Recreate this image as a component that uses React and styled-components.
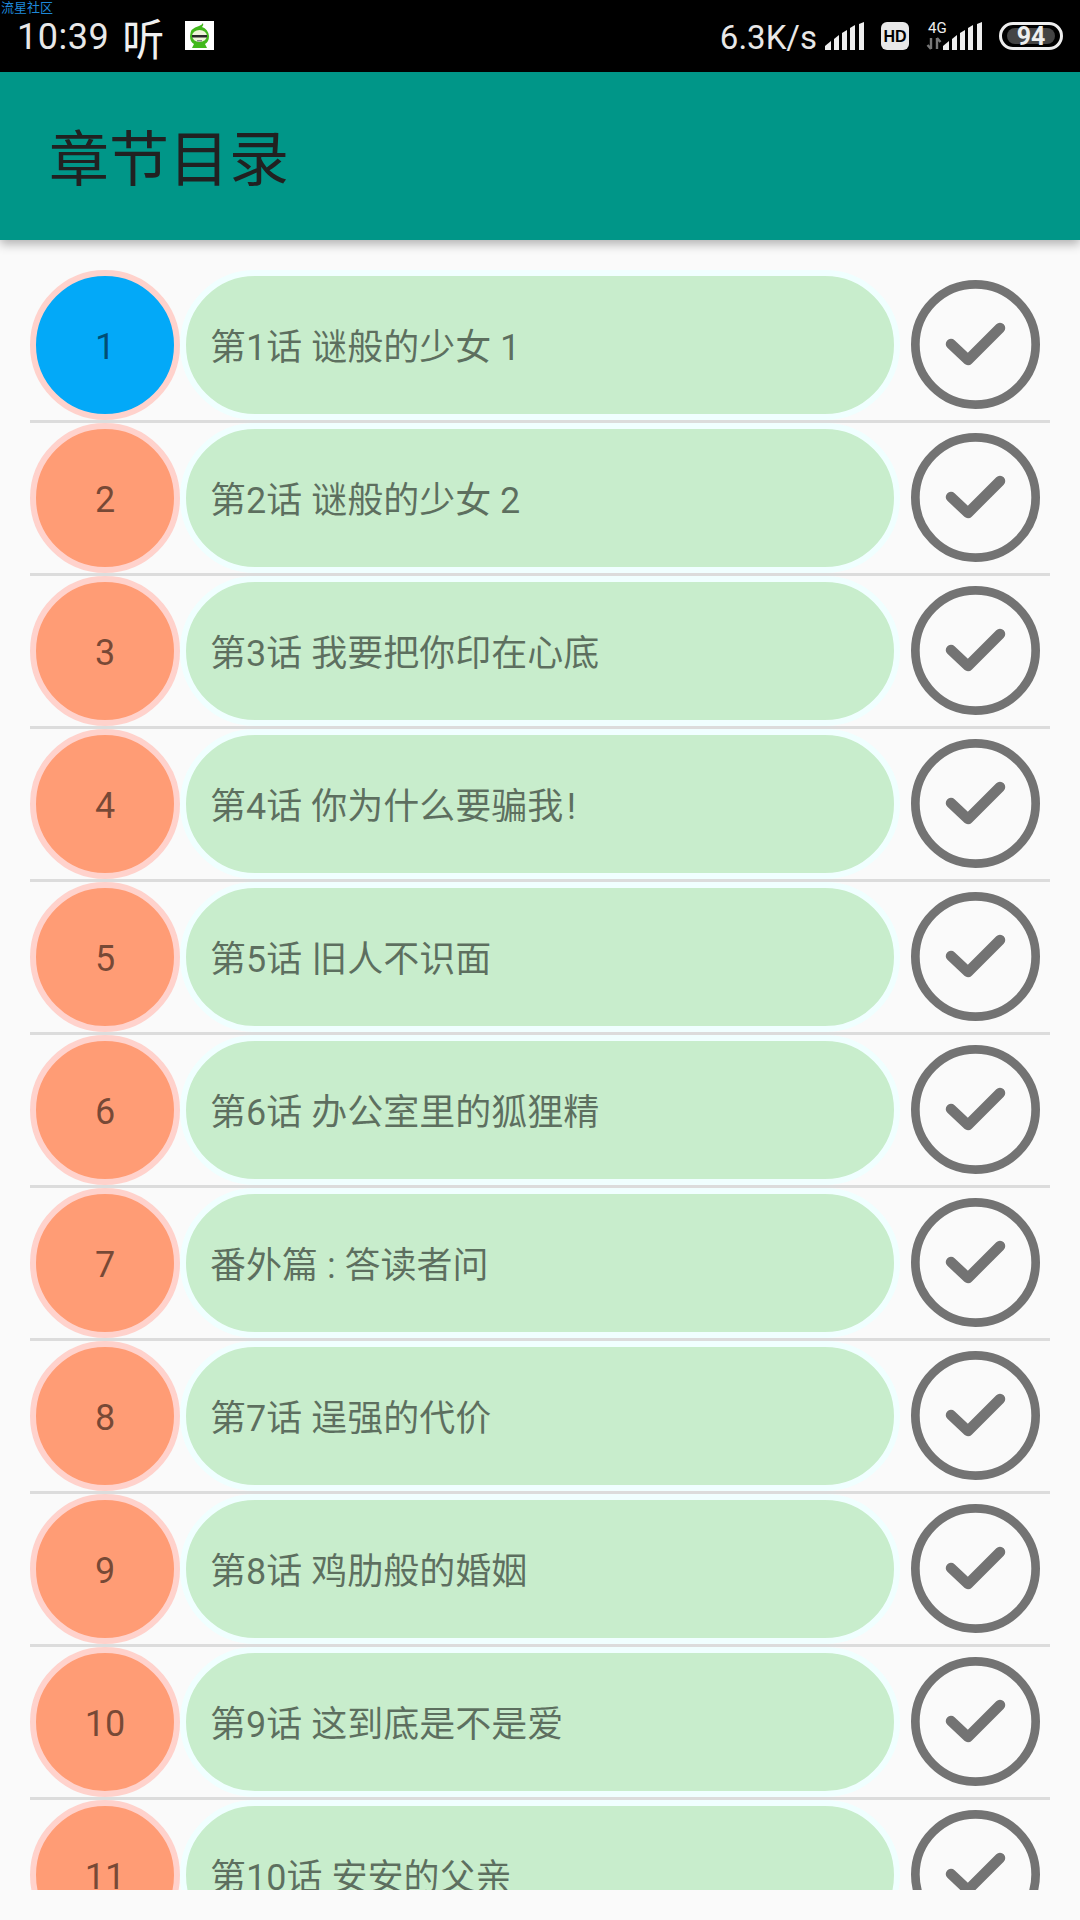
import React from 'react';
import styled, { createGlobalStyle } from 'styled-components';

const Global = createGlobalStyle`
  html, body { margin: 0; padding: 0; background: #fafafa; }
  body { font-family: "Roboto", "Noto Sans CJK SC", sans-serif; }
`;
const Page = styled.div`
  width: 1080px; height: 1920px; display: flex; flex-direction: column; overflow: hidden; background: #fafafa;
`;
const StatusBar = styled.div`
  height: 72px; flex: none; background: #000; color: #e8e8e8; position: relative;
  display: flex; align-items: center; padding: 2px 0 0 17px; box-sizing: border-box;
`;
const Watermark = styled.span`
  position: absolute; left: 1px; top: 0; font-size: 13px; line-height: 14px; color: #1e88d8;
  font-family: "Noto Sans CJK SC", sans-serif;
`;
const Clock = styled.span` font-size: 36px; letter-spacing: .5px; `;
const Listen = styled.span`
  font-family: "Noto Sans CJK SC", sans-serif; font-weight: 400; font-size: 42px; line-height: 44px; color: #f0f0f0;
  margin-left: 13px; width: 42px; display: block; transform: scaleY(1.05);
`;
const Mascot = styled.svg` margin-left: 21px; flex: none; margin-bottom: 3px; `;
const StatusRight = styled.div`
  margin-left: auto; display: flex; align-items: center; padding-right: 17px;
`;
const Speed = styled.span` font-size: 33px; margin-right: 8px; `;
const Icon = styled.svg` flex: none; display: block; margin-left: ${p => p.$gap || 0}px; margin-bottom: 3px; `;
const AppBar = styled.header`
  height: 168px; flex: none; background: #009688; display: flex; align-items: center; padding-left: 49px;
  box-shadow: 0 4px 10px rgba(0,0,0,.3); position: relative; z-index: 1;
`;
const Title = styled.h1`
  margin: -4px 0 0; font-weight: 400; font-size: 60px; color: #212121; font-family: "Noto Sans CJK SC", sans-serif;
`;
const List = styled.div`
  height: 1620px; margin-top: 30px; flex: none; padding: 0 30px; overflow: hidden; box-sizing: border-box;
`;
const Row = styled.div`
  display: flex; align-items: center; height: 153px; box-sizing: border-box; border-bottom: 3px solid #dcdcdc;
`;
const Badge = styled.div`
  width: 150px; height: 150px; flex: none; box-sizing: border-box; border-radius: 50%;
  border: 6px solid #ffd2cc; background: ${p => p.$active ? '#03a9f8' : '#ff9c75'};
  color: rgba(0,0,0,.54); display: flex; align-items: center; justify-content: center; font-size: 36px; padding-top: 4px;
`;
const Pill = styled.div`
  width: 720px; height: 150px; flex: none; box-sizing: border-box; border-radius: 75px;
  border: 6px solid #f0ffff; background: #c8edcc; color: rgba(0,0,0,.54);
  display: flex; align-items: center; padding: 0 0 2px 24px; font-size: 36px; white-space: pre;
  font-family: "Roboto", "Noto Sans CJK SC", sans-serif;
`;
const CheckWrap = styled.div` margin: 0 0 0 11px; flex: none; display: flex; align-self: flex-start; padding-top: 10px; `;

const items = ['第1话 谜般的少女 1','第2话 谜般的少女 2','第3话 我要把你印在心底','第4话 你为什么要骗我\u200a!','第5话 旧人不识面','第6话 办公室里的狐狸精','番外篇 : 答读者问','第7话 逞强的代价','第8话 鸡肋般的婚姻','第9话 这到底是不是爱','第10话 安安的父亲'];

const Bars = ({ gap = 0 }) => (
  <Icon $gap={gap} width="40" height="28" viewBox="0 0 40 28" fill="#eee">
    <polygon points="0,28 0,24 6,19 6,28" />
    <polygon points="9,28 9,17 14,13 14,28" />
    <polygon points="17,28 17,11 22,8 22,28" />
    <polygon points="25,28 25,6 30,3 30,28" />
    <polygon points="34,28 34,2 39,0 39,28" />
  </Icon>
);

export default function App() {
  return (
    <Page>
      <Global />
      <StatusBar>
        <Watermark>流星社区</Watermark>
        <Clock>10:39</Clock>
        <Listen>听</Listen>
        <Mascot width="29" height="29" viewBox="0 0 29 29">
          <rect width="29" height="29" fill="#fff" />
          <path d="M18 2 q1 2 -1 4 q6 2 7 9 q0 6 -4 8 l2 4 h-15 l2 -4 q-4 -2 -4 -8 q0 -8 9 -10 q3 -1 4 -3z" fill="#42b81c" />
          <ellipse cx="14.5" cy="15" rx="7.5" ry="6" fill="#eef5d8" />
          <rect x="7" y="14" width="15" height="2.5" fill="#2a2a2a" />
          <rect x="12" y="19" width="5" height="1.5" fill="#8a8a8a" />
        </Mascot>
        <StatusRight>
          <Speed>6.3K/s</Speed>
          <Bars />
          <Icon $gap={16} width="28" height="28" viewBox="0 0 28 28">
            <rect width="28" height="28" rx="6" fill="#e8e8e8" />
            <text x="14" y="20" textAnchor="middle" fontFamily="Liberation Sans" fontWeight="700" fontSize="16" fill="#000">HD</text>
          </Icon>
          <Icon $gap={17} width="28" height="28" viewBox="0 0 28 28">
            <text x="2" y="11" fontFamily="Roboto" fontSize="15" fill="#eee">4G</text>
            <path d="M5 27 V16 M1.5 23 L5 27 M11 27 V16 M11 16 L14.5 20" stroke="#777" strokeWidth="2.4" fill="none" />
          </Icon>
          <Bars gap={-11} />
          <Icon $gap={16} width="64" height="28" viewBox="0 0 64 28">
            <rect x="1.5" y="1.5" width="61" height="25" rx="12.5" fill="none" stroke="#eee" strokeWidth="3" />
            <rect x="8" y="6" width="48" height="16" rx="8" fill="#444" />
            <text x="32" y="23" textAnchor="middle" fontFamily="Roboto" fontWeight="700" fontSize="25" fill="#eee">94</text>
          </Icon>
        </StatusRight>
      </StatusBar>
      <AppBar><Title>章节目录</Title></AppBar>
      <List>
        {items.map((t, i) => (
          <Row key={i}>
            <Badge $active={i === 0}>{i + 1}</Badge>
            <Pill>{t}</Pill>
            <CheckWrap>
              <svg width="129" height="129" viewBox="0 0 129 129">
                <circle cx="64.5" cy="64.5" r="60.15" fill="none" stroke="#737373" strokeWidth="8.7" />
                <path d="M40 64 L57 80 L89 48" fill="none" stroke="#737373" strokeWidth="10.5" strokeLinecap="round" strokeLinejoin="round" />
              </svg>
            </CheckWrap>
          </Row>
        ))}
      </List>
    </Page>
  );
}
